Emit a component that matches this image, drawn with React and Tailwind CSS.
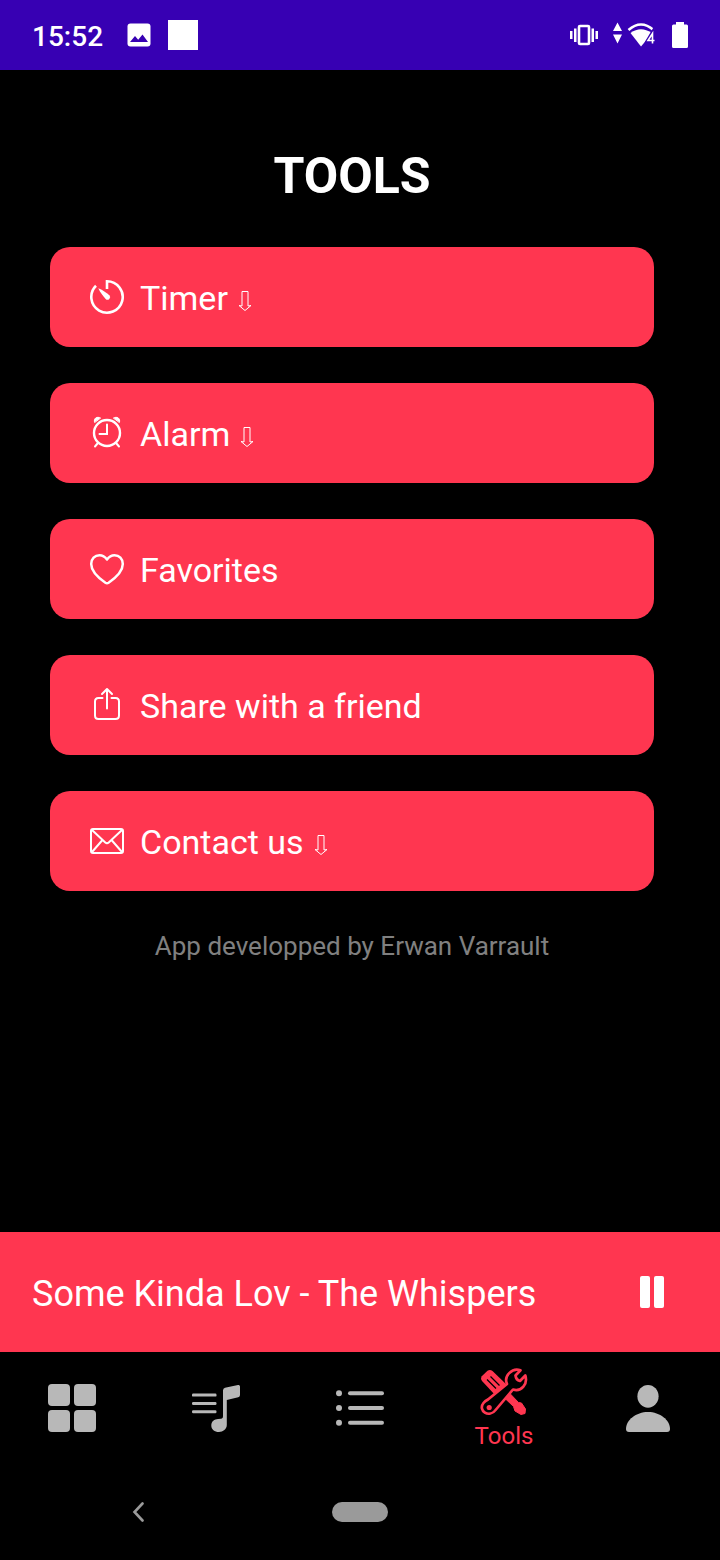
import React from 'react';

const TimerIcon = () => (
  <svg viewBox="0 0 36 36" className="w-9 h-9 shrink-0" fill="none" stroke="currentColor" strokeWidth="2.6" aria-hidden="true">
    <path d="M18 10V2.3A15.7 15.7 0 1 1 7 6.8" />
    <path d="M9.3 9.3C14 11.3 18 14 20.3 16.2A2.6 2.6 0 0 1 16.6 19.9C14.3 17.5 11.3 13.7 9.3 9.3Z" fill="currentColor" stroke="none" />
  </svg>
);

const AlarmIcon = () => (
  <svg viewBox="0 0 36 36" className="w-9 h-9 shrink-0" fill="none" stroke="currentColor" strokeWidth="2.4" strokeLinecap="round" aria-hidden="true">
    <circle cx="18" cy="18" r="13" />
    <path d="M18 9.5V19H10.5M8.5 28.5L6 31.5M27.5 28.5L30 31.5" strokeWidth="2" />
    <path d="M5.500 7.200C4.300 3.400 8 1 11.300 2.900ZM30.500 7.200C31.700 3.400 28 1 24.700 2.900Z" fill="currentColor" strokeWidth="1" strokeLinejoin="round" />
  </svg>
);

const HeartIcon = () => (
  <svg viewBox="0 0 36 36" className="w-9 h-9 shrink-0" fill="none" stroke="currentColor" strokeWidth="2.5" strokeLinejoin="round" aria-hidden="true">
    <path d="M18 8.5C15.5 5 13 4.2 10.5 4.2C5.8 4.2 2.2 8 2.2 13C2.2 21.5 11 28 16.4 31.8Q18 32.8 19.6 31.8C25 28 33.8 21.5 33.8 13C33.8 8 30.2 4.2 25.5 4.2C23 4.2 20.5 5 18 8.5Z" />
  </svg>
);

const ShareIcon = () => (
  <svg viewBox="0 0 36 36" className="w-9 h-9 shrink-0" fill="none" stroke="currentColor" strokeWidth="2" strokeLinecap="round" strokeLinejoin="round" aria-hidden="true">
    <path d="M13.5 11H9.5Q6 11 6 14.5V28.5Q6 32 9.5 32H26.5Q30 32 30 28.5V14.5Q30 11 26.5 11H22.5" />
    <path d="M18 21.5V2.5M13 7L18 2L23 7" />
  </svg>
);

const MailIcon = () => (
  <svg viewBox="0 0 36 36" className="w-9 h-9 shrink-0" fill="none" stroke="currentColor" strokeWidth="2" strokeLinejoin="round" aria-hidden="true">
    <rect x="2" y="6" width="32" height="24" rx="2" />
    <path d="M3 7L16.3 19.5Q18 21 19.7 19.5L33 7M3 29L13.5 17M33 29L22.5 17" />
  </svg>
);

const DownArrow = () => (
  <svg viewBox="0 0 14 22" className="w-3.5 h-6 shrink-0 mt-2" fill="none" stroke="currentColor" strokeWidth="1" aria-hidden="true">
    <path d="M4 1.5H10V16L13 15.5L7 20.5L1 15.5L4 16Z" />
  </svg>
);

const PauseIcon = () => (
  <svg viewBox="0 0 24 32" className="w-6 h-8" fill="currentColor" aria-hidden="true">
    <rect width="10" height="32" rx="2" />
    <rect x="14" width="10" height="32" rx="2" />
  </svg>
);

const GridIcon = () => (
  <svg viewBox="0 0 48 48" className="w-12 h-12" fill="currentColor" aria-hidden="true">
    <rect width="22" height="22" rx="4" />
    <rect x="26" width="22" height="22" rx="4" />
    <rect y="26" width="22" height="22" rx="4" />
    <rect x="26" y="26" width="22" height="22" rx="4" />
  </svg>
);

const MusicIcon = () => (
  <svg viewBox="0 0 48 48" className="w-12 h-12" fill="currentColor" aria-hidden="true">
    <rect y="9.6" width="24.5" height="3" rx="1.2" />
    <rect y="18" width="24.5" height="3" rx="1.2" />
    <rect y="26.2" width="24.5" height="3" rx="1.2" />
    <path d="M31 34V6.5Q31 4.500 33 3.800L46 1Q48 .6 48 2.500V11Q48 12.800 46.200 13.300L34.800 16V41C34.800 45 31 48 27 48C22.500 48 19.300 45.500 19.300 41.500C19.300 37 22.500 35.500 26 35L29 34.800Q31 34.800 31 32Z" />
  </svg>
);

const ListIcon = () => (
  <svg viewBox="0 0 48 48" className="w-12 h-12" fill="currentColor" aria-hidden="true">
    <circle cx="3" cy="9.3" r="3" />
    <circle cx="3" cy="24" r="3" />
    <circle cx="3" cy="38.8" r="3" />
    <rect x="12" y="7.3" width="36" height="4" rx="2" />
    <rect x="12" y="22" width="36" height="4" rx="2" />
    <rect x="12" y="36.8" width="36" height="4" rx="2" />
  </svg>
);

const ToolsIcon = () => (
  <svg viewBox="0 0 48 48" className="w-12 h-12" aria-hidden="true">
    {/* screwdriver */}
    <path d="M2 13Q.2 11 1.500 8.500L7.500 2.800Q10 1 12.500 3L27 17L16 28Z" fill="currentColor" />
    <path d="M7 11.500L16 20.500M10.500 8.500L19.500 17.500" stroke="#000" strokeWidth="1.3" />
    <path d="M23 28.500L28.500 24L38.500 34.500L41.500 35L45.500 41L45 45.500L41 46.500L35 43L33.500 38.500Z" fill="currentColor" stroke="currentColor" strokeLinejoin="round" />
    {/* wrench */}
    <path d="M40.500 2.300L35.500 7.500Q36 12 40 13L45.300 7.500C48 16 41.500 24 33 21.500L16 41.500C9 51 -2.500 42.500 3.500 35Q5 33.200 8 31.500L27 16C23.500 8 32 -.5 40.500 2.300Z" fill="#000" stroke="currentColor" strokeWidth="2.700" strokeLinejoin="round" />
    <circle cx="9.2" cy="39.5" r="2.6" fill="currentColor" />
  </svg>
);

const UserIcon = () => (
  <svg viewBox="0 0 48 48" className="w-12 h-12" fill="currentColor" aria-hidden="true">
    <ellipse cx="24" cy="12.3" rx="10.6" ry="11.4" />
    <path d="M2 45C2 36 12 28 24 28C36 28 46 36 46 45Q46 48 43 48H5Q2 48 2 45Z" />
  </svg>
);

const tools = [
  { label: 'Timer', Icon: TimerIcon, expandable: true },
  { label: 'Alarm', Icon: AlarmIcon, expandable: true },
  { label: 'Favorites', Icon: HeartIcon },
  { label: 'Share with a friend', Icon: ShareIcon },
  { label: 'Contact us', Icon: MailIcon, expandable: true },
];

const tabs = [
  { label: 'Home', Icon: GridIcon },
  { label: 'Music', Icon: MusicIcon },
  { label: 'Playlists', Icon: ListIcon },
  { label: 'Tools', Icon: ToolsIcon },
  { label: 'Profile', Icon: UserIcon },
];

const StatusBar = () => (
  <header className="flex items-center justify-between h-[70px] pl-8 pr-7 bg-[#3700b3]">
    <div className="flex items-center">
      <span className="text-[28px] leading-8 pt-1 font-medium">15:52</span>
      <svg viewBox="0 0 24 24" className="w-6 h-6 ml-6" aria-hidden="true">
        <rect x=".5" y=".5" width="23" height="23" rx="3" fill="currentColor" />
        <path d="M3 19L8 13L11.2 16.8L15.5 11.5L21 19Z" fill="#3700b3" />
      </svg>
      <div className="w-[30px] h-[30px] ml-[17px] bg-white" />
    </div>
    <div className="flex items-center">
      <svg viewBox="0 0 28 22" className="w-7 h-[22px]" fill="currentColor" aria-hidden="true">
        <path d="M0 7H2.5V15H0ZM4 4.5H6.5V18H4ZM21.5 4.5H24V18H21.5ZM25.5 7H28V15H25.5Z" />
        <rect x="9" y="2" width="10" height="18" rx="1" fill="none" stroke="currentColor" strokeWidth="2.6" />
      </svg>
      <svg viewBox="0 0 44 28" className="w-11 h-7 ml-3.5" fill="currentColor" aria-hidden="true">
        <path d="M5.5 1.500L10 10H1ZM1 13.500H10L5.5 22.500Z" />
        <path d="M16.500 9Q29 -2 41.500 9" fill="none" stroke="currentColor" strokeWidth="2.6" />
        <path d="M18.500 12Q29 4.500 39.500 12L34.500 19L29 25.500Z" />
        <path d="M40.500 23V12L36 19.500H43" fill="none" stroke="#3700b3" strokeWidth="4" />
        <path d="M40.500 22.500V12.500L36 19.500H42.500" fill="none" stroke="currentColor" strokeWidth="1.600" />
      </svg>
      <svg viewBox="0 0 24 28" className="w-6 h-7 ml-3" fill="currentColor" aria-hidden="true">
        <path d="M8 1H16V3.5H18.5Q20 3.5 20 5V25.5Q20 27 18.5 27H5.5Q4 27 4 25.5V5Q4 3.5 5.5 3.5H8Z" />
      </svg>
    </div>
  </header>
);

const ToolButton = ({ label, Icon, expandable }) => (
  <button
    type="button"
    className="w-full h-[100px] px-[39px] flex items-center rounded-[20px] bg-[#ff3650] text-left text-[34px] leading-10"
  >
    <Icon />
    <span className="ml-[15px] mt-0.5 mr-2.5">{label}</span>
    {expandable && <DownArrow />}
  </button>
);

const Player = () => (
  <section className="flex items-center justify-between h-[120px] pl-8 pr-14 bg-[#ff3650]">
    <p className="text-[36px] leading-[44px] pt-1">Some Kinda Lov - The Whispers</p>
    <button type="button" aria-label="Pause">
      <PauseIcon />
    </button>
  </section>
);

const TabBar = ({ active }) => (
  <nav className="grid grid-cols-5 h-28">
    {tabs.map(({ label, Icon }) => {
      const isActive = label === active;
      return (
        <button
          key={label}
          type="button"
          aria-label={label}
          className={`flex flex-col items-center justify-center ${isActive ? 'text-[#ff3650]' : 'text-[#b8b8b8]'}`}
        >
          <Icon />
          {isActive && <span className="text-2xl leading-8 pt-1 -mb-1">{label}</span>}
        </button>
      );
    })}
  </nav>
);

const SystemNav = () => (
  <footer className="grid grid-cols-5 items-center h-24 text-[#9a9a9a]">
    <button type="button" aria-label="Back" className="justify-self-end">
      <svg viewBox="0 0 12 24" className="w-3 h-6" fill="none" stroke="currentColor" strokeWidth="2.6" strokeLinecap="round" aria-hidden="true">
        <path d="M10.500 3.500L2.500 12L10.500 20.500" />
      </svg>
    </button>
    <button type="button" aria-label="Home" className="col-start-3 justify-self-center w-14 h-5 rounded-full bg-[#9a9a9a]" />
  </footer>
);

export default function App() {
  return (
    <div className="min-h-screen flex flex-col bg-black text-white font-[Roboto,sans-serif]">
      <StatusBar />
      <main className="flex-1 pt-[76px] pl-[50px] pr-[66px] text-center">
        <h1 className="text-[50px] leading-[60px] font-bold">TOOLS</h1>
        <div className="flex flex-col gap-9 mt-[41px]">
          {tools.map((tool) => (
            <ToolButton key={tool.label} {...tool} />
          ))}
        </div>
        <p className="mt-[39px] text-[26px] leading-8 text-[#808080]">App developped by Erwan Varrault</p>
      </main>
      <Player />
      <TabBar active="Tools" />
      <SystemNav />
    </div>
  );
}
